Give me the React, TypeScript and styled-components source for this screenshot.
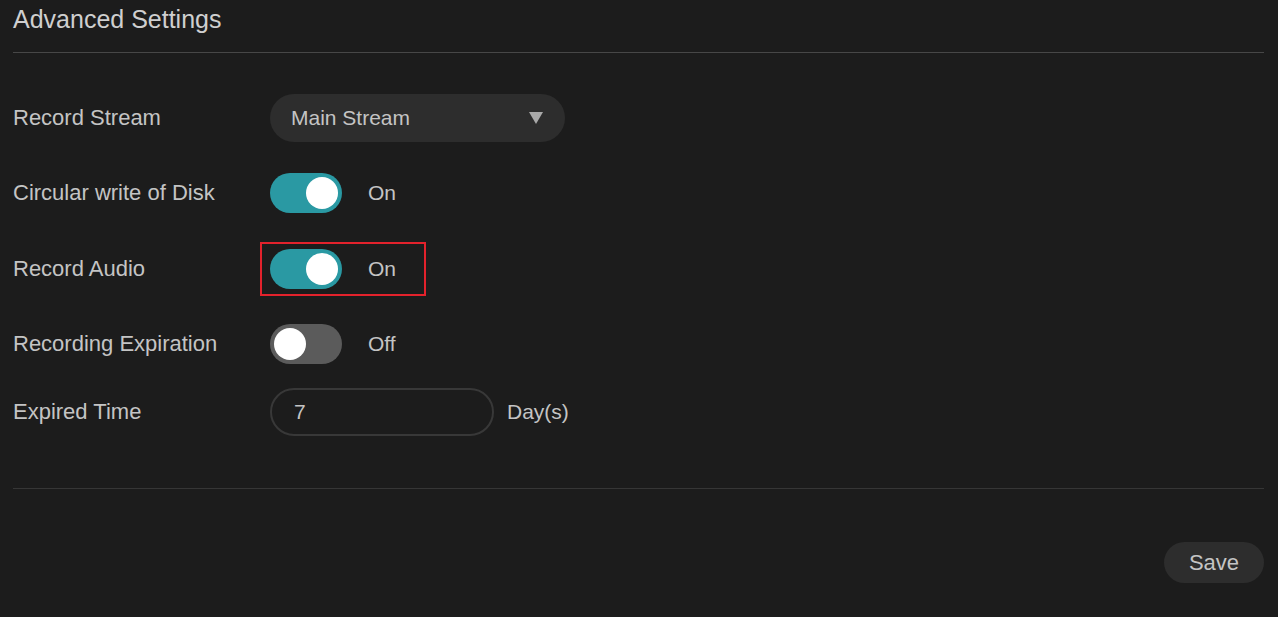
import React, { useState } from 'react';
import styled, { createGlobalStyle } from 'styled-components';

const GlobalStyle = createGlobalStyle`
  html, body {
    margin: 0;
    padding: 0;
    background: #1c1c1c;
  }
  body {
    font-family: 'Liberation Sans', Arial, sans-serif;
    color: #c4c4c4;
  }
`;

const Page = styled.div`
  min-height: 617px;
  padding: 0 14px 0 13px;
  box-sizing: border-box;
  background: #1c1c1c;
`;

const Header = styled.div`
  padding: 5px 0 18px;
  border-bottom: 1px solid #474747;
`;

const Title = styled.h1`
  margin: 0;
  font-size: 25px;
  font-weight: normal;
  line-height: 29px;
  color: #cfcfcf;
`;

const Form = styled.div`
  padding: 27px 0 45px;
  border-bottom: 1px solid #363636;
`;

const Row = styled.div<{ $h: number }>`
  display: grid;
  grid-template-columns: 257px 1fr;
  align-items: center;
  height: ${p => p.$h}px;
`;

const Label = styled.div`
  font-size: 22px;
  color: #c4c4c4;
`;

const Control = styled.div`
  display: flex;
  align-items: center;
`;

const Boxed = styled.div`
  display: flex;
  align-items: center;
  margin-left: -10px;
  padding: 5px 28px 5px 8px;
  border: 2px solid #e3222c;
`;

const Select = styled.div`
  display: flex;
  align-items: center;
  justify-content: space-between;
  width: 295px;
  height: 48px;
  box-sizing: border-box;
  padding: 0 22px 0 21px;
  border-radius: 24px;
  background: #2d2d2d;
  font-size: 21px;
  color: #c4c4c4;
`;

const Arrow = styled.span`
  width: 0;
  height: 0;
  border-left: 7px solid transparent;
  border-right: 7px solid transparent;
  border-top: 12px solid #a9a9a9;
`;

const Track = styled.button<{ $on: boolean }>`
  position: relative;
  width: 72px;
  height: 40px;
  padding: 0;
  border: none;
  border-radius: 20px;
  cursor: pointer;
  background: ${p => (p.$on ? '#2a99a3' : '#5b5b5b')};
`;

const Knob = styled.span<{ $on: boolean }>`
  position: absolute;
  top: 4px;
  left: ${p => (p.$on ? '36px' : '4px')};
  width: 32px;
  height: 32px;
  border-radius: 50%;
  background: #ffffff;
`;

const State = styled.span`
  margin-left: 26px;
  font-size: 21px;
  color: #c4c4c4;
`;

const Input = styled.input`
  width: 224px;
  height: 48px;
  box-sizing: border-box;
  padding: 0 22px;
  border: 2px solid #383838;
  border-radius: 24px;
  background: transparent;
  font-family: 'Liberation Sans', Arial, sans-serif;
  font-size: 21px;
  color: #c4c4c4;
  outline: none;
`;

const Unit = styled.span`
  margin-left: 13px;
  font-size: 21px;
  color: #c4c4c4;
`;

const Footer = styled.div`
  display: flex;
  justify-content: flex-end;
  padding-top: 53px;
`;

const SaveButton = styled.button`
  width: 100px;
  height: 41px;
  border: none;
  border-radius: 21px;
  background: #2d2d2d;
  font-family: 'Liberation Sans', Arial, sans-serif;
  font-size: 22px;
  color: #c4c4c4;
  cursor: pointer;
`;

const Toggle: React.FC<{ on: boolean; onChange: () => void }> = ({ on, onChange }) => (
  <>
    <Track $on={on} onClick={onChange}>
      <Knob $on={on} />
    </Track>
    <State>{on ? 'On' : 'Off'}</State>
  </>
);

const App: React.FC = () => {
  const [circular, setCircular] = useState(true);
  const [audio, setAudio] = useState(true);
  const [expire, setExpire] = useState(false);
  const [days, setDays] = useState('7');

  return (
    <Page>
      <GlobalStyle />
      <Header>
        <Title>Advanced Settings</Title>
      </Header>

      <Form>
        <Row $h={75}>
          <Label>Record Stream</Label>
          <Control>
            <Select>
              <span>Main Stream</span>
              <Arrow />
            </Select>
          </Control>
        </Row>

        <Row $h={76}>
          <Label>Circular write of Disk</Label>
          <Control>
            <Toggle on={circular} onChange={() => setCircular(!circular)} />
          </Control>
        </Row>

        <Row $h={75}>
          <Label>Record Audio</Label>
          <Control>
            <Boxed>
              <Toggle on={audio} onChange={() => setAudio(!audio)} />
            </Boxed>
          </Control>
        </Row>

        <Row $h={75}>
          <Label>Recording Expiration</Label>
          <Control>
            <Toggle on={expire} onChange={() => setExpire(!expire)} />
          </Control>
        </Row>

        <Row $h={62}>
          <Label>Expired Time</Label>
          <Control>
            <Input value={days} onChange={e => setDays(e.target.value)} />
            <Unit>Day(s)</Unit>
          </Control>
        </Row>
      </Form>

      <Footer>
        <SaveButton>Save</SaveButton>
      </Footer>
    </Page>
  );
};

export default App;
